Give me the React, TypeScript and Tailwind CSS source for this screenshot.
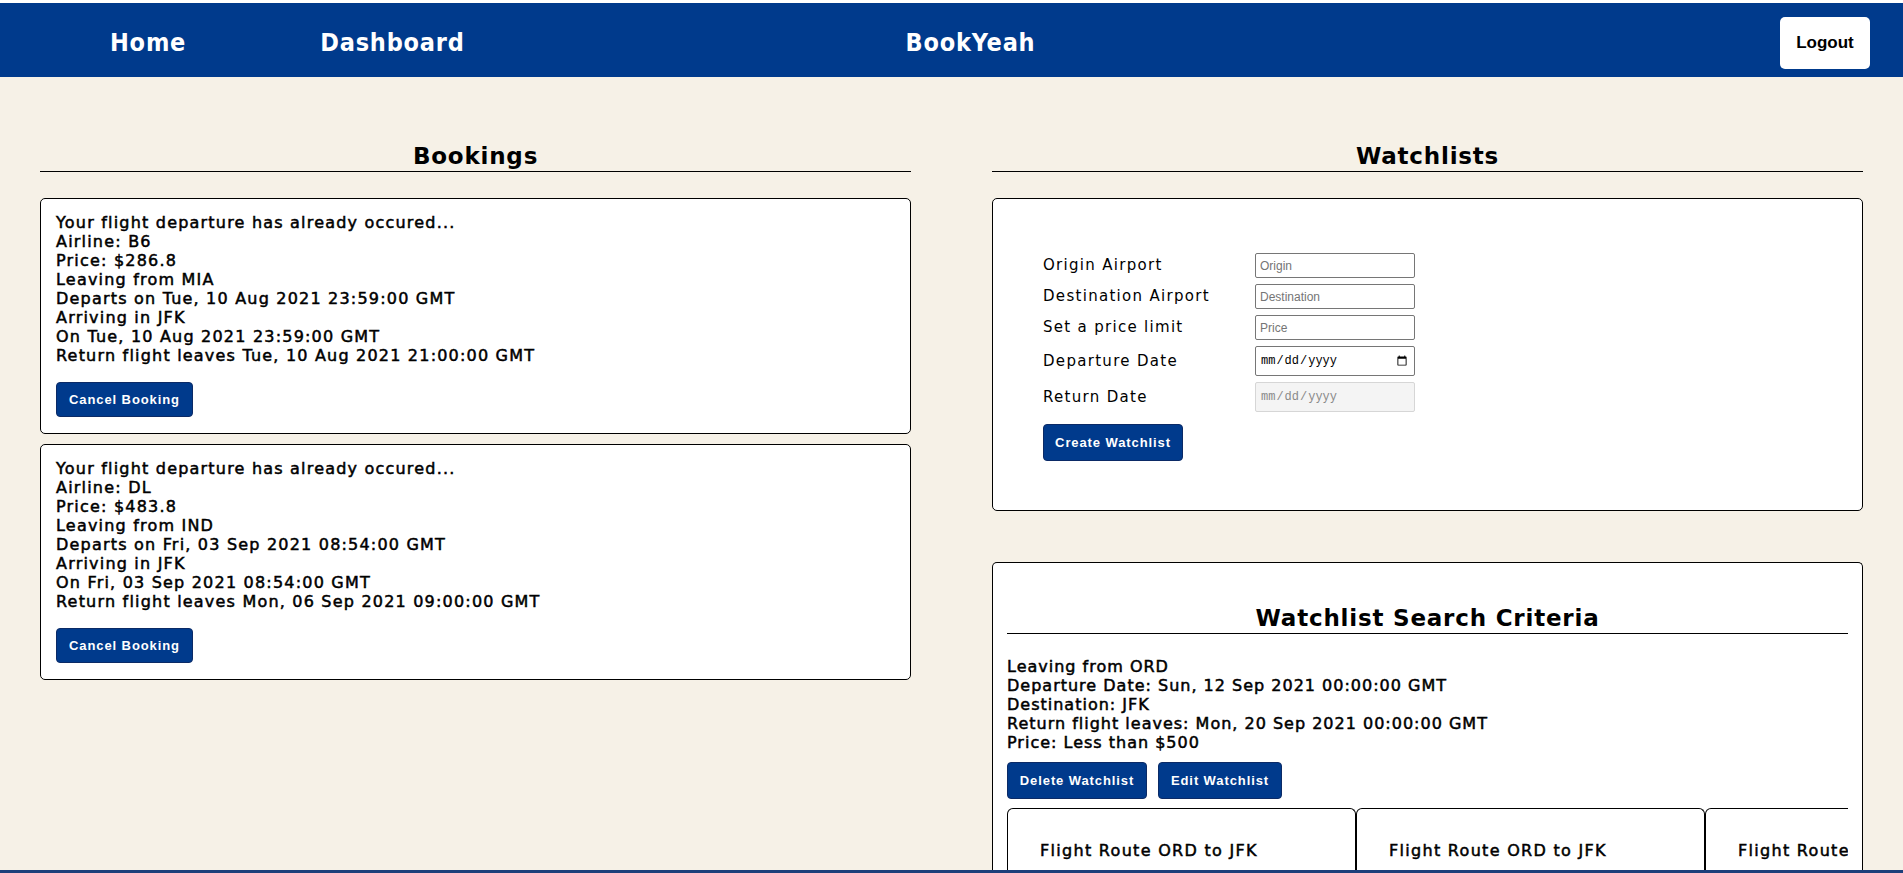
import React from 'react';

interface Booking {
  airline: string;
  price: string;
  from: string;
  departs: string;
  to: string;
  arrives: string;
  returns: string;
}

const bookings: Booking[] = [
  {
    airline: 'B6',
    price: '$286.8',
    from: 'MIA',
    departs: 'Tue, 10 Aug 2021 23:59:00 GMT',
    to: 'JFK',
    arrives: 'Tue, 10 Aug 2021 23:59:00 GMT',
    returns: 'Tue, 10 Aug 2021 21:00:00 GMT',
  },
  {
    airline: 'DL',
    price: '$483.8',
    from: 'IND',
    departs: 'Fri, 03 Sep 2021 08:54:00 GMT',
    to: 'JFK',
    arrives: 'Fri, 03 Sep 2021 08:54:00 GMT',
    returns: 'Mon, 06 Sep 2021 09:00:00 GMT',
  },
];

const btn =
  "rounded-[4px] border border-[#0b2a66] bg-[#003a8c] px-[8px] font-['Liberation_Sans',Arial,sans-serif] text-[13px] font-bold tracking-[0.9px] text-white";

const bodyText = "text-[16px] leading-[19px] tracking-[1.2px] [-webkit-text-stroke:0.5px_black]";

const SectionTitle = ({ children }: { children: React.ReactNode }) => (
  <h2 className="border-b border-black text-center text-[23px] font-bold leading-[29px] tracking-[0.8px]">
    {children}
  </h2>
);

const BookingCard = ({ b }: { b: Booking }) => (
  <div className="rounded-[5px] border border-black bg-white px-[15px] pt-[14px] pb-[16px]">
    <div className={bodyText}>
      <p>Your flight departure has already occured...</p>
      <p>Airline: {b.airline}</p>
      <p>Price: {b.price}</p>
      <p>Leaving from {b.from}</p>
      <p>Departs on {b.departs}</p>
      <p>Arriving in {b.to}</p>
      <p>On {b.arrives}</p>
      <p>Return flight leaves {b.returns}</p>
    </div>
    <button className={`${btn} mt-[17px] h-[35px] w-[137px]`}>Cancel Booking</button>
  </div>
);

const inputBase = 'w-[160px] border rounded-[2px] px-[4px] text-[12px]';
const textInput = `${inputBase} h-[25px] border-[#767676] bg-white font-['Liberation_Sans',Arial,sans-serif] placeholder:text-[#757575]`;
const dateInput = `${inputBase} h-[30px] font-['Liberation_Mono','DejaVu_Sans_Mono',monospace]`;

const FormRow = ({ label, children, h }: { label: string; children: React.ReactNode; h: string }) => (
  <div className={`flex items-center ${h}`}>
    <label className="w-[212px] text-[15px] tracking-[1.3px]">{label}</label>
    {children}
  </div>
);

const App = () => {
  return (
    <div className="min-h-screen bg-[#f6f1e7] font-['DejaVu_Sans',Verdana,sans-serif] text-black">
      <nav className="flex h-[77px] items-center border-t-[3px] border-white bg-[#003a8c] pt-[6px] font-['DejaVu_Sans_Condensed','DejaVu_Sans',sans-serif] text-[25px] font-bold tracking-[0.8px] text-white">
        <a className="ml-[110px]">Home</a>
        <a className="ml-[134px]">Dashboard</a>
        <a className="ml-[441px]">BookYeah</a>
        <button className="ml-auto mr-[33px] h-[52px] w-[90px] rounded-[5px] bg-white font-['Liberation_Sans',Arial,sans-serif] text-[17px] font-bold tracking-normal text-black">
          Logout
        </button>
      </nav>

      <main className="grid grid-cols-2 gap-[81px] px-[40px] pt-[65px]">
        <section>
          <SectionTitle>Bookings</SectionTitle>
          <div className="mt-[26px] flex flex-col gap-[10px]">
            {bookings.map((b, i) => (
              <BookingCard key={i} b={b} />
            ))}
          </div>
        </section>

        <section>
          <SectionTitle>Watchlists</SectionTitle>
          <div className="mt-[26px] h-[313px] rounded-[5px] border border-black bg-white px-[50px] pt-[51px]">
            <FormRow label="Origin Airport" h="h-[31px]">
              <input className={textInput} placeholder="Origin" />
            </FormRow>
            <FormRow label="Destination Airport" h="h-[31px]">
              <input className={textInput} placeholder="Destination" />
            </FormRow>
            <FormRow label="Set a price limit" h="h-[31px]">
              <input className={textInput} placeholder="Price" />
            </FormRow>
            <FormRow label="Departure Date" h="h-[36px]">
              <input type="date" className={`${dateInput} border-[#767676] bg-white`} />
            </FormRow>
            <FormRow label="Return Date" h="h-[36px]">
              <input type="date" disabled className={`${dateInput} border-[#d6d6d6] bg-[#f4f4f4] text-[#8a8a8a]`} />
            </FormRow>
            <button className={`${btn} mt-[9px] h-[37px] w-[140px]`}>Create Watchlist</button>
          </div>

          <div className="mt-[51px] h-[330px] overflow-hidden rounded-t-[5px] border border-b-0 border-black bg-white px-[14px] pt-[41px]">
            <SectionTitle>Watchlist Search Criteria</SectionTitle>
            <div className="mt-[23px] text-[16px] leading-[19px] tracking-[1px] [-webkit-text-stroke:0.5px_black]">
              <p>Leaving from ORD</p>
              <p>Departure Date: Sun, 12 Sep 2021 00:00:00 GMT</p>
              <p>Destination: JFK</p>
              <p>Return flight leaves: Mon, 20 Sep 2021 00:00:00 GMT</p>
              <p>Price: Less than $500</p>
            </div>
            <div className="mt-[10px] flex gap-[11px]">
              <button className={`${btn} h-[37px] w-[140px]`}>Delete Watchlist</button>
              <button className={`${btn} h-[37px] w-[124px]`}>Edit Watchlist</button>
            </div>
            <div className="mt-[9px] flex overflow-hidden">
              {[0, 1, 2].map((i) => (
                <div
                  key={i}
                  className="h-[120px] w-[349px] shrink-0 rounded-t-[6px] border-[1.5px] border-b-0 border-black px-[32px] pt-[30px]"
                >
                  <p className="whitespace-nowrap text-[16px] tracking-[1.3px] [-webkit-text-stroke:0.5px_black]">
                    Flight Route ORD to JFK
                  </p>
                </div>
              ))}
            </div>
          </div>
        </section>
      </main>

      <div className="fixed bottom-0 left-0 right-0 h-[3px] bg-[#1c3f7a]" />
    </div>
  );
};

export default App;
